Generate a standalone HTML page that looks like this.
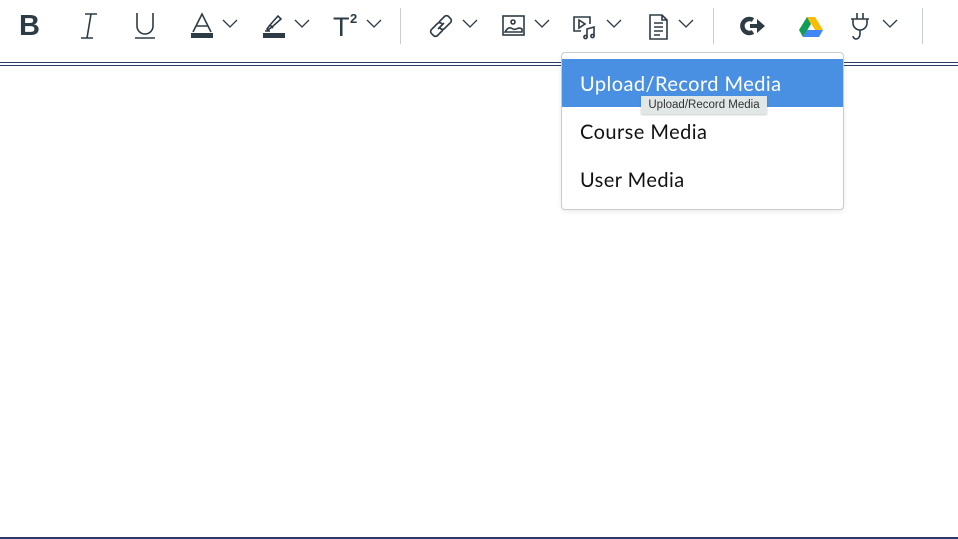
<!DOCTYPE html>
<html><head><style>
*{margin:0;padding:0;box-sizing:border-box}
body{width:958px;height:539px;position:relative;background:#fff;overflow:hidden;font-family:"Liberation Sans",sans-serif}
.a{position:absolute}
svg.i{position:absolute;fill:none;stroke:#2d3b45;stroke-width:1.6}
.chev{position:absolute;width:16px;height:10px}
.sep{position:absolute;top:8px;width:1px;height:36px;background:#c7cdd1}
.menu{position:absolute;left:561px;top:52px;width:283px;height:158px;border:1px solid #c7cdd1;border-radius:4px;background:#fff;box-shadow:0 2px 4px rgba(0,0,0,.08)}
.it{position:absolute;left:0;width:281px;height:48px;font-size:20px;letter-spacing:0.45px;line-height:50px;padding-left:18px;color:#111;font-family:"Lato","Liberation Sans",sans-serif}
</style></head><body>
<div class="a" style="left:19px;top:9px;font-size:29px;font-weight:bold;color:#2d3b45;line-height:34px">B</div>
<svg class="i" style="left:78px;top:12px" width="22" height="28" viewBox="0 0 22 28"><path d="M7 2h12M3 26h12M13 2L9 26"/></svg>
<svg class="i" style="left:133px;top:12px" width="24" height="28" viewBox="0 0 24 28"><path d="M4 1v13a8 8 0 0 0 16 0V1M2 26h20"/></svg>
<svg class="i" style="left:190px;top:12px" width="24" height="28" viewBox="0 0 24 28"><path d="M3 20L12 2l9 18M6 14h12"/><rect x="1" y="21" width="22" height="5" fill="#2d3b45" stroke="none"/></svg>
<svg class="i" style="left:262px;top:12px" width="24" height="28" viewBox="0 0 24 28"><path d="M5 17l3-4 8-9 3 3-9 8-4 3zM8 13l3 3M3 19h5"/><rect x="1" y="21" width="22" height="5" fill="#2d3b45" stroke="none"/></svg>
<div class="a" style="left:333px;top:11px;font-size:27px;color:#2d3b45;line-height:32px;font-weight:300">T</div>
<div class="a" style="left:350px;top:11px;font-size:13px;font-weight:bold;color:#2d3b45">2</div>
<div class="sep" style="left:400px"></div>
<svg class="i" style="left:428px;top:13px" width="26" height="26" viewBox="0 0 26 26"><path d="M11 9l5-5a3 3 0 0 1 5 0l1 1a3 3 0 0 1 0 5l-5 5a3 3 0 0 1-5 0M15 17l-5 5a3 3 0 0 1-5 0l-1-1a3 3 0 0 1 0-5l5-5a3 3 0 0 1 5 0M10 16l6-6"/></svg>
<svg class="i" style="left:502px;top:14px" width="24" height="24" viewBox="0 0 24 24"><rect x="1" y="2" width="21" height="19"/><circle cx="11" cy="8" r="2"/><path d="M3 18c3-5 5-5 8-3s5-3 9 0v3H3z"/></svg>
<svg class="i" style="left:573px;top:14px" width="26" height="26" viewBox="0 0 26 26"><path d="M8 17H1V3h16v7"/><path d="M6 6l6 4-6 4z"/><path d="M14 23V15l7-2v9"/><circle cx="12.5" cy="23" r="1.6"/><circle cx="19.5" cy="22" r="1.6"/></svg>
<svg class="i" style="left:648px;top:13px" width="22" height="28" viewBox="0 0 22 28"><path d="M2 2h12l5 5v19H2zM14 2v5h5M6 10h9M6 14h9M6 18h9M6 22h6"/></svg>
<div class="sep" style="left:713px"></div>
<svg class="a" style="left:740px;top:15px" width="26" height="22" viewBox="0 0 26 22"><path d="M13 5A7 7 0 1 0 13 17" fill="none" stroke="#2d3b45" stroke-width="4.5"/><path d="M10 9h7V4l8 7-8 7v-5h-7z" fill="#2d3b45"/></svg>
<svg class="a" style="left:799px;top:16px" width="24" height="21" viewBox="0 0 24 21"><path d="M8 1h8l8 13h-8z" fill="#fbbc04"/><path d="M8 1L0 14l4 7 8-13z" fill="#0f9d58"/><path d="M4 21h16l4-7H8z" fill="#4285f4"/></svg>
<svg class="i" style="left:848px;top:12px" width="24" height="30" viewBox="0 0 24 30"><path d="M9 1v6M15 1v6M3 7h18M5 7v4a7 7 0 0 0 14 0V7M12 18v4c0 3-2 5-4 5s-3-2-3-3"/></svg>
<svg class="chev" style="left:222px;top:19px" viewBox="0 0 16 10"><path d="M1 1l7 7 7-7" fill="none" stroke="#2d3b45" stroke-width="1.3"/></svg>
<svg class="chev" style="left:294px;top:19px" viewBox="0 0 16 10"><path d="M1 1l7 7 7-7" fill="none" stroke="#2d3b45" stroke-width="1.3"/></svg>
<svg class="chev" style="left:366px;top:19px" viewBox="0 0 16 10"><path d="M1 1l7 7 7-7" fill="none" stroke="#2d3b45" stroke-width="1.3"/></svg>
<svg class="chev" style="left:462px;top:19px" viewBox="0 0 16 10"><path d="M1 1l7 7 7-7" fill="none" stroke="#2d3b45" stroke-width="1.3"/></svg>
<svg class="chev" style="left:534px;top:19px" viewBox="0 0 16 10"><path d="M1 1l7 7 7-7" fill="none" stroke="#2d3b45" stroke-width="1.3"/></svg>
<svg class="chev" style="left:606px;top:19px" viewBox="0 0 16 10"><path d="M1 1l7 7 7-7" fill="none" stroke="#2d3b45" stroke-width="1.3"/></svg>
<svg class="chev" style="left:678px;top:19px" viewBox="0 0 16 10"><path d="M1 1l7 7 7-7" fill="none" stroke="#2d3b45" stroke-width="1.3"/></svg>
<svg class="chev" style="left:882px;top:19px" viewBox="0 0 16 10"><path d="M1 1l7 7 7-7" fill="none" stroke="#2d3b45" stroke-width="1.3"/></svg>
<div class="sep" style="left:922px"></div>
<div class="a" style="left:0;top:62px;width:958px;height:1px;background:#2d3b6a"></div>
<div class="a" style="left:0;top:65px;width:958px;height:1px;background:#2d3b6a"></div>
<div class="a" style="left:0;top:537px;width:958px;height:2px;background:#2d3b6a"></div>
<div class="menu">
<div class="it" style="top:6px;background:#4a90e2;color:#fff">Upload/Record Media</div>
<div class="it" style="top:54px">Course Media</div>
<div class="it" style="top:102px">User Media</div>
</div>
<div class="a" style="left:641px;top:96px;width:126px;height:18px;background:#e1e7e6;font-size:11.5px;line-height:18px;color:#333;text-align:center;box-shadow:0 1px 2px rgba(0,0,0,.2)">Upload/Record Media</div>
</body></html>
